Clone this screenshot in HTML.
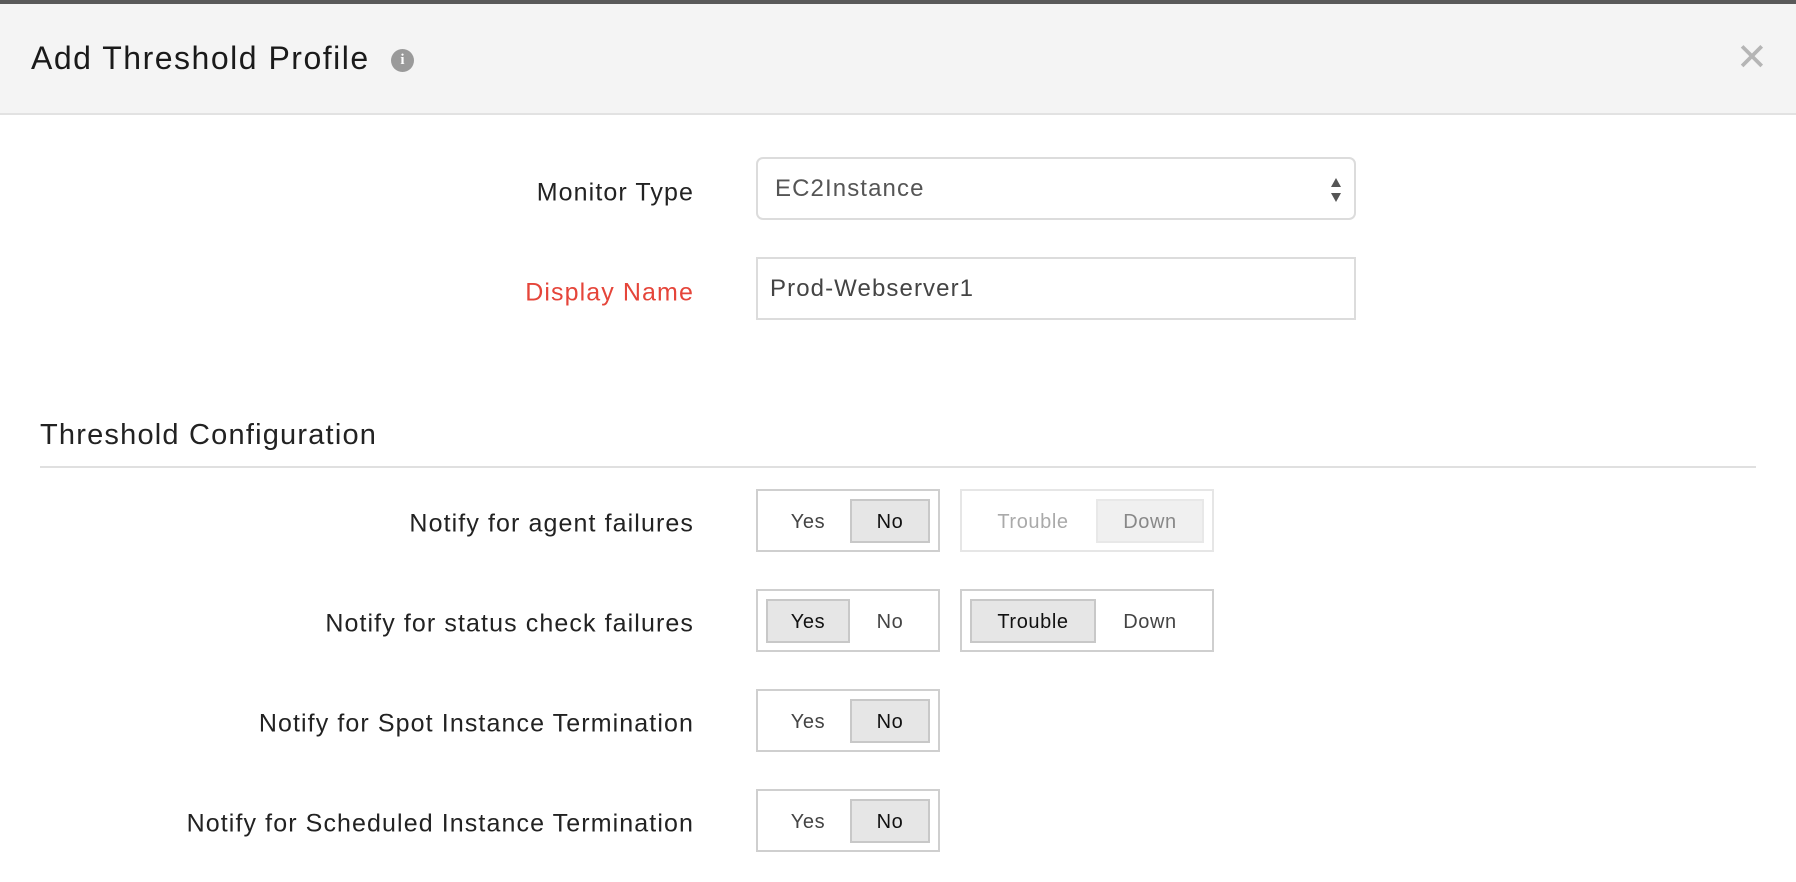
<!DOCTYPE html>
<html><head><style>
*{box-sizing:border-box;margin:0;padding:0}
body{width:1796px;height:882px;background:#fff;font-family:"Liberation Sans",sans-serif;position:relative;overflow:hidden;color:#222}
.top{position:absolute;left:0;top:0;width:1796px;height:4px;background:#5a5a5a}
.hdr{position:absolute;left:0;top:4px;width:1796px;height:111px;background:#f4f4f4;border-bottom:2px solid #e2e2e2}
.title{position:absolute;left:31px;top:40px;font-size:32px;letter-spacing:1.5px;color:#1a1a1a}
.info{position:absolute;left:391px;top:49px;width:23px;height:23px;border-radius:50%;background:#9a9a9a;color:#fff;font:bold 15px "Liberation Serif",serif;text-align:center;line-height:23px}
.close{position:absolute;left:1736px;top:36px;font-size:38px;color:#b5b5b5;line-height:44px}
.lbl{position:absolute;right:1102px;font-size:25px;letter-spacing:1.1px;color:#222;white-space:nowrap;transform:translateY(-50%);margin-top:2px}
.field{position:absolute;left:756px;width:600px;height:63px;border:2px solid #dcdcdc;font-size:24px;letter-spacing:1.1px;color:#555;padding-left:12px;line-height:59px}
.sec{position:absolute;left:40px;top:419px;font-size:29px;letter-spacing:1.2px;color:#222}
.hr{position:absolute;left:40px;top:466px;width:1716px;height:2px;background:#e0e0e0}
.tg{position:absolute;height:63px;border:2px solid #cfcfcf;background:#fff}
.tg span{position:absolute;top:8px;height:44px;line-height:42px;text-align:center;font-size:20px;letter-spacing:0.6px;color:#444;border:2px solid transparent}
.tg span.on{background:#e6e6e6;border-color:#c8c8c8;color:#111}
.dis{border-color:#e6e6e6}
.dis span{color:#aaa}
.dis span.on{background:#f0f0f0;border-color:#e8e8e8;color:#888}
</style></head><body>
<div class="top"></div>
<div class="hdr"></div>
<div class="title">Add Threshold Profile</div>
<div class="info">i</div>
<div class="close">✕</div>

<div class="lbl" style="top:191px">Monitor Type</div>
<div class="field" style="top:157px;border-radius:7px;padding-left:17px">EC2Instance
<svg style="position:absolute;right:12px;top:18px" width="12" height="26" viewBox="0 0 12 26"><path d="M6 1L11 10H1Z M6 25L11 16H1Z" fill="#555"/></svg></div>
<div class="lbl" style="top:291px;color:#e5453a">Display Name</div>
<div class="field" style="top:257px;color:#444">Prod-Webserver1</div>

<div class="sec">Threshold Configuration</div>
<div class="hr"></div>

<div class="lbl" style="top:522px">Notify for agent failures</div>
<div class="tg" style="left:756px;top:489px;width:184px"><span style="left:8px;width:84px">Yes</span><span class="on" style="left:92px;width:80px">No</span></div>
<div class="tg dis" style="left:960px;top:489px;width:254px"><span style="left:8px;width:126px">Trouble</span><span class="on" style="left:134px;width:108px">Down</span></div>

<div class="lbl" style="top:622px">Notify for status check failures</div>
<div class="tg" style="left:756px;top:589px;width:184px"><span class="on" style="left:8px;width:84px">Yes</span><span style="left:92px;width:80px">No</span></div>
<div class="tg" style="left:960px;top:589px;width:254px"><span class="on" style="left:8px;width:126px">Trouble</span><span style="left:134px;width:108px">Down</span></div>

<div class="lbl" style="top:722px">Notify for Spot Instance Termination</div>
<div class="tg" style="left:756px;top:689px;width:184px"><span style="left:8px;width:84px">Yes</span><span class="on" style="left:92px;width:80px">No</span></div>

<div class="lbl" style="top:822px">Notify for Scheduled Instance Termination</div>
<div class="tg" style="left:756px;top:789px;width:184px"><span style="left:8px;width:84px">Yes</span><span class="on" style="left:92px;width:80px">No</span></div>
</body></html>
